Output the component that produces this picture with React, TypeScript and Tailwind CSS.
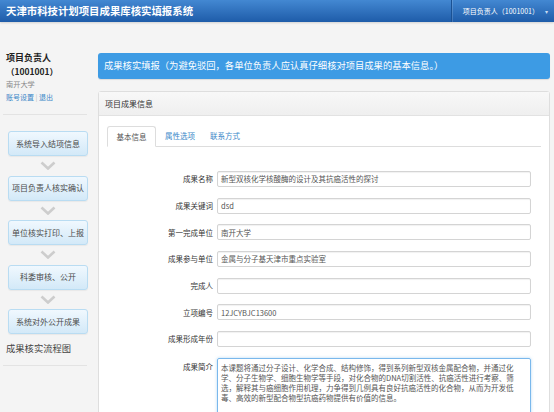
const rows: [string, string][] = [
  ["成果名称", "新型双核化学核酸酶的设计及其抗癌活性的探讨"],
  ["成果关键词", "dsd"],
  ["第一完成单位", "南开大学"],
  ["成果参与单位", "金属与分子基天津市重点实验室"],
  ["完成人", ""],
  ["立项编号", "12JCYBJC13600"],
  ["成果形成年份", ""],
];

const steps = ["系统导入结项信息", "项目负责人核实确认", "单位核实打印、上报", "科委审核、公开", "系统对外公开成果"];

function Chevron() {
  return (
    <div className="flex h-[19.5px] w-[80px] items-center justify-center">
      <svg width="16" height="9" viewBox="0 0 16 9">
        <polyline points="1.5,1.5 8,7.5 14.5,1.5" fill="none" stroke="#cdcdcd" strokeWidth="2.6" />
      </svg>
    </div>
  );
}

export default function App() {
  return (
    <div className="h-[412px] w-[554px] overflow-hidden bg-[#f4f4f4] font-['Noto_Sans_CJK_SC','Liberation_Sans',sans-serif] text-[#333]">
      <header className="flex h-[22px] items-stretch bg-gradient-to-b from-[#4388d2] to-[#1e5ca9] shadow-[0_1px_2px_rgba(0,0,0,0.15)]">
        <div className="flex flex-1 items-center pl-[6px] text-[10.4px] font-bold text-white">天津市科技计划项目成果库核实填报系统</div>
        <div className="flex items-center border-l border-[#1a5193] pl-[11px] pr-[6px] text-[7px] text-white shadow-[inset_1px_0_0_rgba(255,255,255,0.15)]">
          项目负责人（1001001）<span className="ml-[6px] text-[6px] text-[#c8dcf2]">▾</span>
        </div>
      </header>

      <div className="flex">
        <aside className="w-[98px] pl-[6px] pt-[29px]">
          <div className="text-[9px] font-semibold leading-[14px] text-[#222]">项目负责人</div>
          <div className="text-[8.5px] font-semibold leading-[13px] text-[#222]">（1001001）</div>
          <div className="text-[7.2px] leading-[13px] text-[#888]">南开大学</div>
          <div className="text-[7px] leading-[13px] text-[#3a87c8]">
            账号设置 <span className="text-[#bbb]">|</span> 退出
          </div>
          <div className="mt-[10px] h-px w-[84px] -ml-[3px] bg-[#e3e3e3]" />
          <div className="ml-[2px] mt-[16px] flex flex-col">
            {steps.map((s, i) => (
              <div key={s}>
                {i > 0 && <Chevron />}
                <div className="flex h-[25px] w-[80px] items-center justify-center rounded-[3px] border border-[#b9dcf2] bg-gradient-to-b from-[#f0f8fe] to-[#d3e9f8] text-[8px] text-[#4a4a4a] shadow-[0_1px_1px_rgba(0,0,0,0.05)]">
                  {s}
                </div>
              </div>
            ))}
          </div>
          <div className="mt-[7px] text-[9.3px] leading-[14px] text-[#444]">成果核实流程图</div>
          <div className="mt-[10px] h-px w-[84px] -ml-[3px] bg-[#e3e3e3]" />
        </aside>

        <main className="w-[452px] pt-[31px]">
          <div className="flex h-[26px] items-center rounded-[3px] bg-[#3d9be4] pl-[6px] text-[9.3px] text-white shadow-[0_1px_1px_rgba(0,0,0,0.1)]">
            成果核实填报（为避免驳回，各单位负责人应认真仔细核对项目成果的基本信息。）
          </div>

          <section className="mt-[12px] h-[400px] rounded-t-[3px] border border-[#dedede] bg-white">
            <div className="flex h-[24px] items-center border-b border-[#e2e2e2] bg-gradient-to-b from-[#f8f8f8] to-[#efefef] pl-[6px] text-[8px] text-[#333]">
              项目成果信息
            </div>
            <div className="px-[8px] pt-[10px]">
              <div className="flex h-[21px] items-end border-b border-[#dddddd]">
                <div className="-mb-px flex h-[21px] items-center rounded-t-[3px] border border-b-white border-[#dddddd] bg-white px-[8.5px] text-[7.5px] text-[#555]">
                  基本信息
                </div>
                <div className="flex h-[20px] items-center px-[9px] text-[7.5px] text-[#3a87c8]">属性选项</div>
                <div className="flex h-[20px] items-center px-[6px] text-[7.5px] text-[#3a87c8]">联系方式</div>
              </div>
            </div>

            <div className="mt-[24px] flex flex-col gap-[10.67px]">
              {rows.map(([label, value]) => (
                <div key={label} className="flex items-center">
                  <div className="w-[114px] text-right text-[7.5px] text-[#333]">{label}</div>
                  <div className="ml-[4px] flex h-[16px] w-[314px] items-center rounded-[2px] border border-[#d4d4d4] px-[3px] text-[7.5px] text-[#555] shadow-[inset_0_1px_1px_rgba(0,0,0,0.06)]">
                    {value}
                  </div>
                </div>
              ))}
              <div className="flex items-start">
                <div className="w-[114px] pt-[3px] text-right text-[7.5px] text-[#333]">成果简介</div>
                <div className="ml-[4px] h-[64px] w-[314px] rounded-[2px] border border-[#7ab8ec] px-[3px] pt-[4px] text-[7.5px] leading-[10px] text-[#555] shadow-[0_0_3px_rgba(102,175,233,0.5)]">
                  本课题将通过分子设计、化学合成、结构修饰，得到系列新型双核金属配合物，并通过化学、分子生物学、细胞生物学等手段，对化合物的DNA切割活性、抗癌活性进行考察、筛选，解释其与癌细胞作用机理，力争得到几例具有良好抗癌活性的化合物，从而为开发低毒、高效的新型配合物型抗癌药物提供有价值的信息。
                </div>
              </div>
            </div>
          </section>
        </main>
      </div>
    </div>
  );
}
